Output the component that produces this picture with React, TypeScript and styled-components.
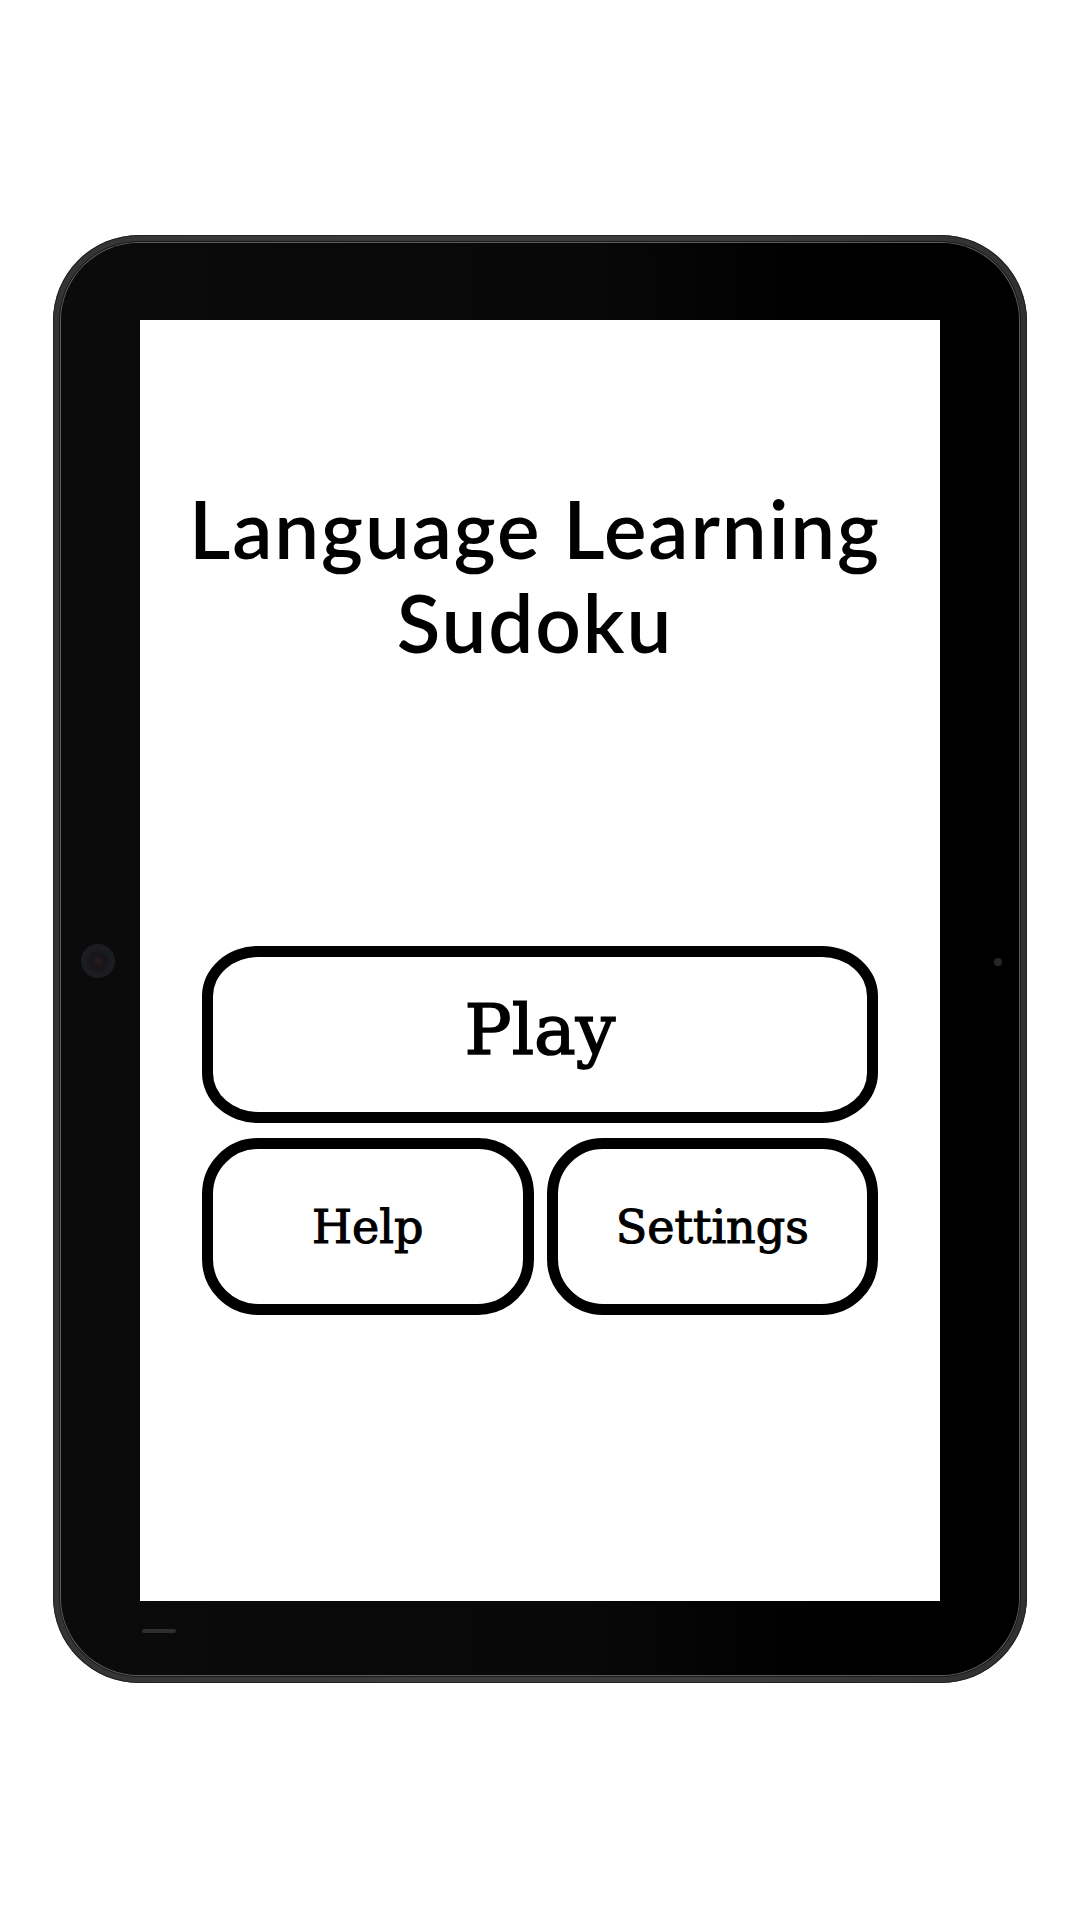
import React from "react";
import styled, { createGlobalStyle } from "styled-components";

const GlobalStyle = createGlobalStyle`
  html, body {
    margin: 0;
    padding: 0;
    background: #ffffff;
  }
  body {
    width: 1080px;
    height: 1920px;
    overflow: hidden;
  }
  * { box-sizing: border-box; }
`;

const Page = styled.div`
  width: 1080px;
  height: 1920px;
  display: flex;
  justify-content: center;
  align-items: flex-start;
  padding-top: 235px;
  background: #ffffff;
`;

const Shell = styled.div`
  position: relative;
  width: 974px;
  height: 1448px;
  padding: 8px;
  border-radius: 86px;
  background: linear-gradient(90deg, #343434 0%, #3c3c3c 40%, #3c3c3c 70%, #303030 100%);
  box-shadow: inset 0 0 0 1px #222222;
`;

const Bezel = styled.div`
  width: 100%;
  height: 100%;
  padding: 77px 79px 74px 79px;
  border-radius: 78px;
  background: linear-gradient(90deg, #0b0b0b 0%, #080808 55%, #010101 75%, #000000 100%);
  box-shadow: 0 0 0 1px #5c5c5c, 0 0 0 2px #1a1a1a;
`;

const Camera = styled.div`
  position: absolute;
  left: 28px;
  top: 709px;
  width: 34px;
  height: 34px;
  border-radius: 50%;
  background: radial-gradient(circle, #2a1a1c 0%, #151518 30%, #1c1d21 55%, #1a1b1f 100%);
`;

const Sensor = styled.div`
  position: absolute;
  left: 941px;
  top: 723px;
  width: 8px;
  height: 8px;
  border-radius: 50%;
  background: #262626;
`;

const HomeBar = styled.div`
  position: absolute;
  left: 89px;
  top: 1394px;
  width: 34px;
  height: 4px;
  border-radius: 2px;
  background: #2e2e2e;
`;

const Screen = styled.main`
  width: 100%;
  height: 100%;
  background: #ffffff;
  display: flex;
  flex-direction: column;
  align-items: center;
  padding-top: 161px;
`;

const Title = styled.h1`
  margin: 0;
  padding-right: 10px;
  font-family: "Lato", "Noto Sans", sans-serif;
  font-weight: 600;
  font-size: 80px;
  line-height: 94px;
  color: #000000;
  text-align: center;
  letter-spacing: 1.9px;
`;

const ButtonGroup = styled.nav`
  margin-top: 277px;
  width: 676px;
  display: flex;
  flex-direction: column;
  gap: 15px;
`;

const ButtonRow = styled.div`
  display: grid;
  grid-template-columns: 1fr 1fr;
  column-gap: 13px;
`;

const MenuButton = styled.button<{ $big?: boolean }>`
  height: 177px;
  border: 11px solid #000000;
  border-radius: ${(p) => (p.$big ? "56px / 50px" : "56px")};
  background: #ffffff;
  display: flex;
  align-items: center;
  justify-content: center;
  padding: 0 0 ${(p) => (p.$big ? "9px" : "0")} 0;
  font-family: "DejaVu Serif", "Liberation Serif", serif;
  font-size: ${(p) => (p.$big ? "70px" : "46px")};
  -webkit-text-stroke: ${(p) => (p.$big ? "1.6px" : "1.1px")} #000000;
  color: #000000;
  cursor: pointer;
`;

export default function App() {
  return (
    <>
      <GlobalStyle />
      <Page>
        <Shell>
          <Bezel>
            <Screen>
              <Title>
                Language Learning
                <br />
                Sudoku
              </Title>
              <ButtonGroup>
                <MenuButton $big>Play</MenuButton>
                <ButtonRow>
                  <MenuButton>Help</MenuButton>
                  <MenuButton>Settings</MenuButton>
                </ButtonRow>
              </ButtonGroup>
            </Screen>
          </Bezel>
          <Camera />
          <Sensor />
          <HomeBar />
        </Shell>
      </Page>
    </>
  );
}
